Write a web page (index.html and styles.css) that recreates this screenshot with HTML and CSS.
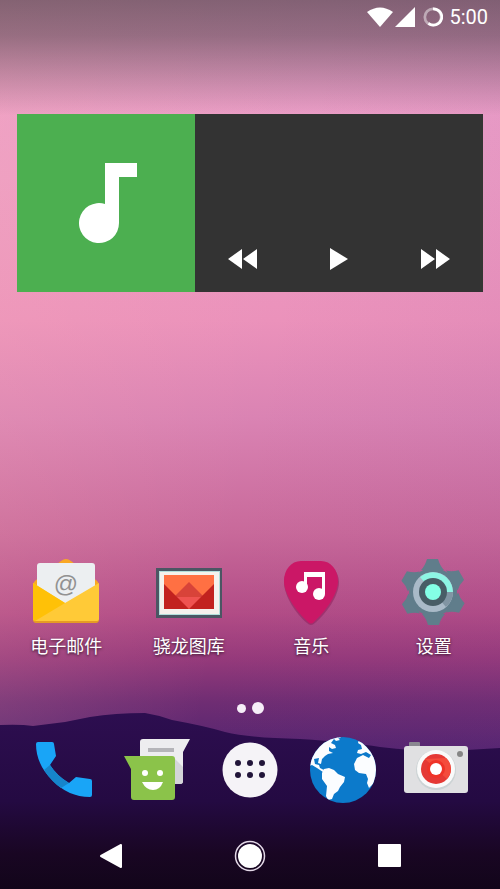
FILE: index.html
```
<!DOCTYPE html>
<html lang="zh-CN">
<head>
    <meta charset="UTF-8">
    <meta name="viewport" content="width=device-width, initial-scale=1.0">
    <title>Launcher</title>
    <link rel="stylesheet" href="styles.css">
</head>
<body>
    <div class="screen">
        <svg class="hills" viewBox="0 0 500 180" preserveAspectRatio="none" aria-hidden="true">
            <defs>
                <linearGradient id="hill" x1="0" y1="0" x2="0" y2="1">
                    <stop offset="0" stop-color="#2d0e50"/>
                    <stop offset="0.5" stop-color="#240a42"/>
                    <stop offset="0.8" stop-color="#190623"/>
                    <stop offset="1" stop-color="#12051a"/>
                </linearGradient>
            </defs>
            <path fill="url(#hill)" d="M0 16Q20 15 33 17L65 13L90 8Q115 4 145 4Q158 6 172 11Q205 17 225 23Q250 29 300 30Q350 33 380 38Q420 43 450 42L500 39V180H0Z"/>
        </svg>

        <header class="status">
            <svg width="26" height="20" viewBox="0 0 26 20"><path fill="#fff" d="M0 5Q13-4 26 5L13 20Z"/></svg>
            <svg width="20" height="20" viewBox="0 0 20 20"><path fill="#fff" d="M20 0V20H0Z"/></svg>
            <svg class="battery" width="20" height="20" viewBox="0 0 22 22" fill="none" stroke="#fff" stroke-width="3">
                <circle cx="11" cy="11" r="9" opacity="0.45"/>
                <path d="M11 2A9 9 0 1 1 6 18"/>
            </svg>
            <time>5:00</time>
        </header>

        <section class="player">
            <div class="cover">
                <svg width="58" height="82" viewBox="0 0 58 82"><path fill="#fff" d="M26 1H58V15H40V61A20 20 0 1 1 26 42Z"/></svg>
            </div>
            <div class="controls">
                <button aria-label="上一首"><svg width="30" height="22" viewBox="0 0 30 22"><path fill="#fff" d="M14 1V21L0 11ZM29 1V21L15 11Z"/></svg></button>
                <button aria-label="播放"><svg width="18" height="22" viewBox="0 0 18 22"><path fill="#fff" d="M0 0L18 11L0 22Z"/></svg></button>
                <button aria-label="下一首"><svg width="30" height="22" viewBox="0 0 30 22"><path fill="#fff" d="M1 1V21L15 11ZM16 1V21L30 11Z"/></svg></button>
            </div>
        </section>

        <nav class="apps">
            <a href="#email">
                <svg class="icon" viewBox="0 0 68 68">
                    <path fill="#f9a825" d="M1 27Q1 24 4 22L29 3Q34-1 39 3L64 22Q67 24 67 27V45H1Z"/>
                    <path fill="#eceff1" d="M5 8Q5 5 8 5H60Q63 5 63 8V48H5Z"/>
                    <text class="at" x="34" y="34" text-anchor="middle">@</text>
                    <path fill="#ffca37" d="M1 25L33 45L67 25V61Q67 64 64 64H4Q1 64 1 61Z"/>
                    <path fill="#ffc107" d="M1 25L33 45L3 63Q1 63 1 60Z"/>
                    <path fill="#e59b25" d="M1 61Q1 63 4 63H64Q67 63 67 61Q67 65 64 65H4Q1 65 1 61Z"/>
                </svg>
                <span>电子邮件</span>
            </a>
            <a href="#gallery">
                <svg class="icon" viewBox="0 0 68 68">
                    <path fill="#4b5663" d="M1 10H67V60H1Z"/>
                    <path fill="#b2dfdb" d="M4 13H65V57H4Z"/>
                    <path fill="#f5f1ec" d="M5 14H64V56H5Z"/>
                    <path fill="#ff7043" d="M9 17H59V51H9Z"/>
                    <path fill="#ef5350" d="M18 38H50L34 51Z"/>
                    <path fill="#d84339" d="M34 24L49 39H19Z"/>
                    <path fill="#c2221f" d="M9 26L34 51H9ZM59 26L34 51H59Z"/>
                </svg>
                <span>骁龙图库</span>
            </a>
            <a href="#music">
                <svg class="icon" viewBox="0 0 68 68">
                    <path fill="#8d1a57" opacity="0.5" d="M7 24C7 14 15 5 24 5H44C54 5 62 14 62 24C62 38 49 56 38 65Q34 69 30 65C19 56 7 38 7 24Z"/>
                    <path fill="#cb1766" d="M7 23C7 12 14 3 24 3H44C54 3 61 12 61 23C61 36 49 53 37 64Q34 67 31 64C19 53 7 36 7 23Z"/>
                    <path fill="#fff" d="M27 14H48V36H45V19H30V29H27Z"/>
                    <circle cx="25" cy="29" r="6" fill="#fff"/>
                    <circle cx="42" cy="36" r="6" fill="#fff"/>
                </svg>
                <span>音乐</span>
            </a>
            <a href="#settings">
                <svg class="icon" viewBox="0 0 68 68">
                    <defs><path id="tooth" d="M27 1H38Q40 8 44 12H21Q25 8 27 1Z"/></defs>
                    <g fill="#607d8b">
                        <circle cx="33" cy="34" r="24"/>
                        <use href="#tooth"/>
                        <use href="#tooth" transform="rotate(60 33 34)"/>
                        <use href="#tooth" transform="rotate(120 33 34)"/>
                        <use href="#tooth" transform="rotate(180 33 34)"/>
                        <use href="#tooth" transform="rotate(240 33 34)"/>
                        <use href="#tooth" transform="rotate(300 33 34)"/>
                    </g>
                    <circle cx="33" cy="34" r="20" fill="#a9bac8"/>
                    <path fill="#8df5e4" d="M33 34L20 19A20 20 0 0 1 53 34Z"/>
                    <path fill="#8195a3" d="M33 34H53A20 20 0 0 1 46 49Z"/>
                    <circle cx="33" cy="34" r="14" fill="#485d66"/>
                    <circle cx="33" cy="34" r="8" fill="#84ffe6"/>
                </svg>
                <span>设置</span>
            </a>
        </nav>

        <div class="pages"><i></i><i class="current"></i></div>

        <nav class="dock">
            <a href="#phone" aria-label="电话">
                <svg class="icon" viewBox="0 0 68 68">
                    <path fill="#19a5f7" d="M8 6H22Q24 6 24 8L26 20L20 29Q27 40 39 47L46 41L60 43Q62 43 62 45V59Q62 61 60 61Q38 61 22 44Q6 28 6 8Q6 6 8 6Z"/>
                    <path fill="#1685cb" d="M20 29Q27 40 39 47L31 52Q22 46 14 34Z"/>
                </svg>
            </a>
            <a href="#messages" aria-label="信息">
                <svg class="icon" viewBox="0 0 68 68">
                    <path fill="#ededef" d="M20 3H67L60 16V45Q60 48 57 48H17V6Q17 3 20 3Z"/>
                    <path fill="#d4d5d8" d="M50 21L60 31V45Q60 48 57 48H50Z"/>
                    <path fill="#b5b5b9" d="M25 12H51V16H25Z"/>
                    <path fill="#8bc34a" d="M1 20H49Q52 20 52 23V61Q52 64 49 64H11Q8 64 8 61V33Z"/>
                    <circle cx="22" cy="37" r="3" fill="#fff"/>
                    <circle cx="37" cy="37" r="3" fill="#fff"/>
                    <path fill="#fff" d="M19 46H40Q37 54 30 54T19 46Z"/>
                </svg>
            </a>
            <a href="#all" aria-label="所有应用">
                <svg class="icon" viewBox="0 0 68 68">
                    <circle cx="34" cy="34" r="27.500" fill="#f5f3f7"/>
                    <g fill="#211439">
                        <circle cx="22" cy="27" r="3"/><circle cx="34" cy="27" r="3"/><circle cx="46" cy="27" r="3"/>
                        <circle cx="22" cy="39" r="3"/><circle cx="34" cy="39" r="3"/><circle cx="46" cy="39" r="3"/>
                    </g>
                </svg>
            </a>
            <a href="#browser" aria-label="浏览器">
                <svg class="icon" viewBox="0 0 68 68">
                    <defs><clipPath id="globe"><circle cx="34" cy="34" r="33"/></clipPath></defs>
                    <circle cx="34" cy="34" r="33" fill="#0c7acb"/>
                    <g clip-path="url(#globe)" fill="#fbfdff">
                        <path d="M0 30V10L14 0L27 0L31 4L27 5L25 3L22 7L26 9L27 12L23 13L20 11L20 15L24 17L19 18L16 20L13 23L12 28L9 27L10 22L5 23L6 28L10 29L11 32L15 34L14 36L8 32L3 29Z"/>
                        <path d="M28 0H33L31 2L28 3Z"/>
                        <path d="M15 33L20 32L25 34L29 38L36 41L35 46L31 51L29 55L25 58L23 63L19 64L17 60L18 50L13 43L13 37Z"/>
                        <path d="M50 3L68 12V40L64 48L60 52L58 47L59 43L57 38L50 37L46 34L45 28L48 22L54 19L60 22L62 19L57 16L52 18L48 17L49 14L53 13L52 9L49 7Z"/>
                    </g>
                </svg>
            </a>
            <a href="#camera" aria-label="相机">
                <svg class="icon" viewBox="0 0 68 68">
                    <path fill="#898790" d="M7 7Q7 6 8 6H17Q18 6 18 7V12H7Z"/>
                    <rect x="2" y="10" width="64" height="47" rx="3" fill="#e0e0e2"/>
                    <circle cx="34" cy="34" r="20" fill="#ccd3d5"/>
                    <circle cx="34" cy="33" r="19" fill="#fafafa"/>
                    <circle cx="34" cy="33" r="15" fill="#e53935"/>
                    <path fill="#f44b3c" d="M23 23L45 43A15 15 0 0 0 44 22Z"/>
                    <circle cx="34" cy="33" r="9" fill="#ef3328"/>
                    <circle cx="34" cy="33" r="6" fill="#fff"/>
                    <circle cx="58" cy="18" r="3" fill="#858585"/>
                </svg>
            </a>
        </nav>

        <footer class="keys">
            <button aria-label="返回"><svg width="24" height="28" viewBox="0 0 24 28"><path fill="#fff" stroke="#fff" stroke-width="2" stroke-linejoin="round" d="M22 3V25L2 14Z"/></svg></button>
            <button aria-label="主屏幕"><svg width="32" height="32" viewBox="0 0 32 32"><circle cx="16" cy="16" r="14.500" fill="none" stroke="#e4d9e8" stroke-width="1.500"/><circle cx="16" cy="16" r="12" fill="#fff"/></svg></button>
            <button aria-label="最近任务"><svg width="24" height="24" viewBox="0 0 24 24"><rect width="23" height="23" x="1" rx="1" fill="#fff"/></svg></button>
        </footer>
    </div>
</body>
</html>
```

FILE: styles.css
```
* {
    box-sizing: border-box;
}
body {
    margin: 0;
    font-family: Roboto, "Noto Sans CJK SC", sans-serif;
    color: white;
}
.screen {
    position: relative;
    display: flex;
    flex-direction: column;
    min-height: 100vh;
    overflow: hidden;
    background:
        linear-gradient(rgba(45, 45, 45, 0.55), rgba(45, 45, 45, 0.45) 4%, rgba(45, 45, 45, 0) 13%),
        linear-gradient(100deg, rgba(255, 180, 180, 0.2), rgba(255, 180, 180, 0) 50%, rgba(120, 60, 150, 0.08)),
        linear-gradient(#eba0cc, #ec9cc4 20%, #eb92bb 36%, #da83b3 47%, #c8699a 60%, #b24c86 69%, #963a7b 74%, #6f2d73 79%, #562570 84%, #4c206a);
}
.hills {
    position: absolute;
    left: 0;
    bottom: 0;
    width: 100%;
    height: 180px;
}
a, button {
    color: inherit;
    text-decoration: none;
}
button {
    display: flex;
    align-items: center;
    justify-content: center;
    padding: 0;
    border: none;
    background: none;
    cursor: pointer;
}
svg {
    display: block;
}

.status {
    display: flex;
    align-items: center;
    justify-content: flex-end;
    gap: 2px;
    height: 34px;
    padding: 0 12px;
}
.battery {
    margin: 0 4px 0 6px;
}
.status time {
    font-size: 20px;
    line-height: 24px;
}

.player {
    display: flex;
    height: 178px;
    margin: 80px 17px auto;
    background: #333;
}
.cover {
    display: flex;
    align-items: center;
    justify-content: center;
    width: 178px;
    padding-left: 4px;
    background: #4caf50;
}
.controls {
    flex: 1;
    display: grid;
    grid-template-columns: repeat(3, 1fr);
    align-items: end;
}
.controls button {
    height: 66px;
}

.icon {
    width: 68px;
    height: 68px;
}
.apps {
    position: relative;
    display: grid;
    grid-template-columns: repeat(4, 1fr);
    padding: 0 5px;
}
.apps a {
    display: flex;
    flex-direction: column;
    align-items: center;
    gap: 9px;
}
.apps span {
    font-size: 18px;
    line-height: 24px;
    text-shadow: 0 1px 3px rgba(0, 0, 0, 0.7);
}
.at {
    font-family: "Liberation Sans", sans-serif;
    font-size: 24px;
    fill: #929292;
}

.pages {
    position: relative;
    display: flex;
    align-items: center;
    justify-content: center;
    gap: 6px;
    padding: 43px 0 22px;
}
.pages i {
    width: 9px;
    height: 9px;
    border-radius: 50%;
    background: #f6eef8;
}
.pages .current {
    width: 12px;
    height: 12px;
}

.dock {
    position: relative;
    display: grid;
    grid-template-columns: repeat(5, 1fr);
    justify-items: center;
    padding: 0 17px;
}

.keys {
    position: relative;
    display: grid;
    grid-template-columns: repeat(3, 1fr);
    height: 66px;
    margin-top: 19px;
    padding: 0 42px;
}
```
